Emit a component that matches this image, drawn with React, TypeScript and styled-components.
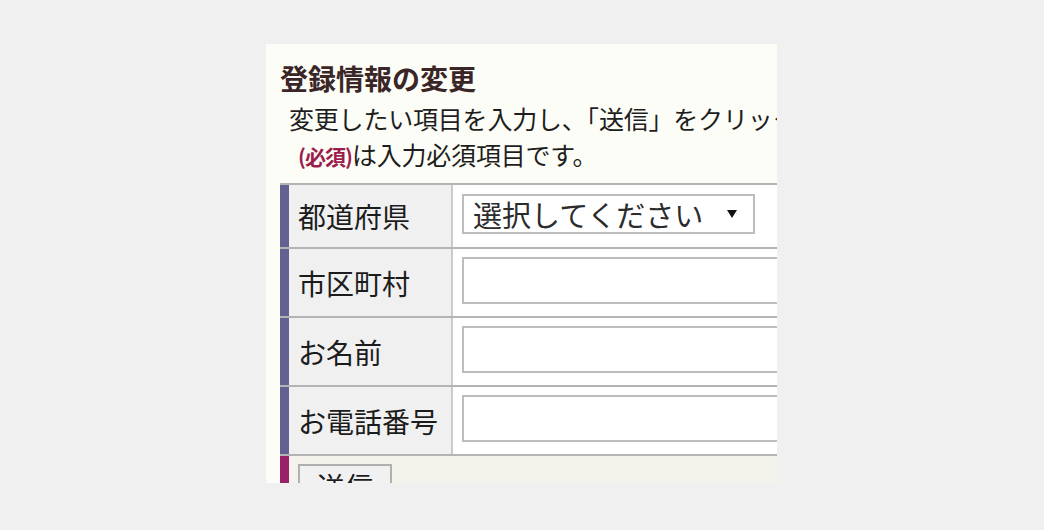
import styled, { createGlobalStyle } from "styled-components";

const GlobalStyle = createGlobalStyle`
  html, body {
    margin: 0;
    padding: 0;
    background: #f0f0f0;
  }
  body {
    font-family: "Noto Sans CJK JP", "Noto Sans", sans-serif;
    color: #222;
  }
`;

const Page = styled.div`
  width: 1044px;
  height: 530px;
  padding: 44px 0 0 266px;
  box-sizing: border-box;
  background: #f0f0f0;
`;

const Panel = styled.section`
  width: 511px;
  height: 439px;
  overflow: hidden;
  background: #fdfdf7;
  padding: 16px 0 0 14px;
  box-sizing: border-box;
`;

const Title = styled.h2`
  margin: 0 0 4px;
  font-size: 28px;
  line-height: 36px;
  font-weight: 700;
  color: #3a2626;
  white-space: nowrap;
`;

const Lead = styled.p<{ $indent?: number }>`
  margin: 0;
  padding-left: ${(p) => p.$indent ?? 9}px;
  font-size: 25px;
  line-height: 36px;
  color: #1e1e1e;
  white-space: nowrap;
  letter-spacing: -0.2px;
`;

const Required = styled.span`
  font-size: 21px;
  font-weight: 700;
  color: #9b1d4c;
  letter-spacing: -1px;
`;

const Form = styled.form`
  margin-top: 9px;
  width: 760px;
`;

const Row = styled.div<{ $accent: string; $bg?: string }>`
  display: grid;
  grid-template-columns: 9px 162px 2px 1fr;
  border-top: 2px solid #b4b4b4;
  background: ${(p) => p.$bg ?? "#fff"};

  &::before {
    content: "";
    background: ${(p) => p.$accent};
  }
`;

const Label = styled.div`
  display: flex;
  align-items: center;
  padding-left: 9px;
  background: #f0f0f0;
  font-size: 28px;
  color: #1c1c1c;
  white-space: nowrap;
`;

const Divider = styled.div`
  background: #cbcbcb;
`;

const Field = styled.div`
  padding: 8px 0 12px 9px;
  background: #fff;
`;

const SelectBox = styled.div`
  display: inline-flex;
  align-items: center;
  height: 40px;
  margin: 1px 0;
  width: 293px;
  box-sizing: border-box;
  border: 2px solid #bdbdbd;
  padding: 0 16px 0 9px;
  font-size: 29px;
  color: #2c2c2c;
  background: #fff;
  white-space: nowrap;
`;

const Arrow = styled.span`
  margin-left: auto;
  width: 0;
  height: 0;
  border-left: 5px solid transparent;
  border-right: 5px solid transparent;
  border-top: 8px solid #111;
`;

const TextInput = styled.input`
  display: block;
  width: 100%;
  height: 47px;
  box-sizing: border-box;
  border: 2px solid #bdbdbd;
  background: #fff;
  padding: 0 8px;
  font-size: 26px;
  font-family: inherit;
  outline: none;
`;

const SubmitCell = styled.div`
  grid-column: 2 / span 3;
  padding: 8px 0 8px 9px;
`;

const SubmitButton = styled.button`
  width: 94px;
  height: 44px;
  border: 2px solid #b0b0b0;
  background: #f1f1f1;
  font-family: inherit;
  font-size: 28px;
  line-height: 40px;
  color: #1c1c1c;
  padding: 0;
`;

const fields = ["市区町村", "お名前", "お電話番号"];

export default function App() {
  return (
    <>
      <GlobalStyle />
      <Page>
        <Panel>
          <Title>登録情報の変更</Title>
          <Lead>変更したい項目を入力し、「送信」をクリックしてください。</Lead>
          <Lead $indent={18}>
            <Required>(必須)</Required>は入力必須項目です。
          </Lead>
          <Form onSubmit={(e) => e.preventDefault()}>
            <Row $accent="#646092">
              <Label>都道府県</Label>
              <Divider />
              <Field>
                <SelectBox>
                  選択してください
                  <Arrow />
                </SelectBox>
              </Field>
            </Row>
            {fields.map((f) => (
              <Row key={f} $accent="#646092">
                <Label>{f}</Label>
                <Divider />
                <Field>
                  <TextInput type="text" />
                </Field>
              </Row>
            ))}
            <Row $accent="#9a2068" $bg="#f3f3eb">
              <SubmitCell>
                <SubmitButton type="submit">送信</SubmitButton>
              </SubmitCell>
            </Row>
          </Form>
        </Panel>
      </Page>
    </>
  );
}
